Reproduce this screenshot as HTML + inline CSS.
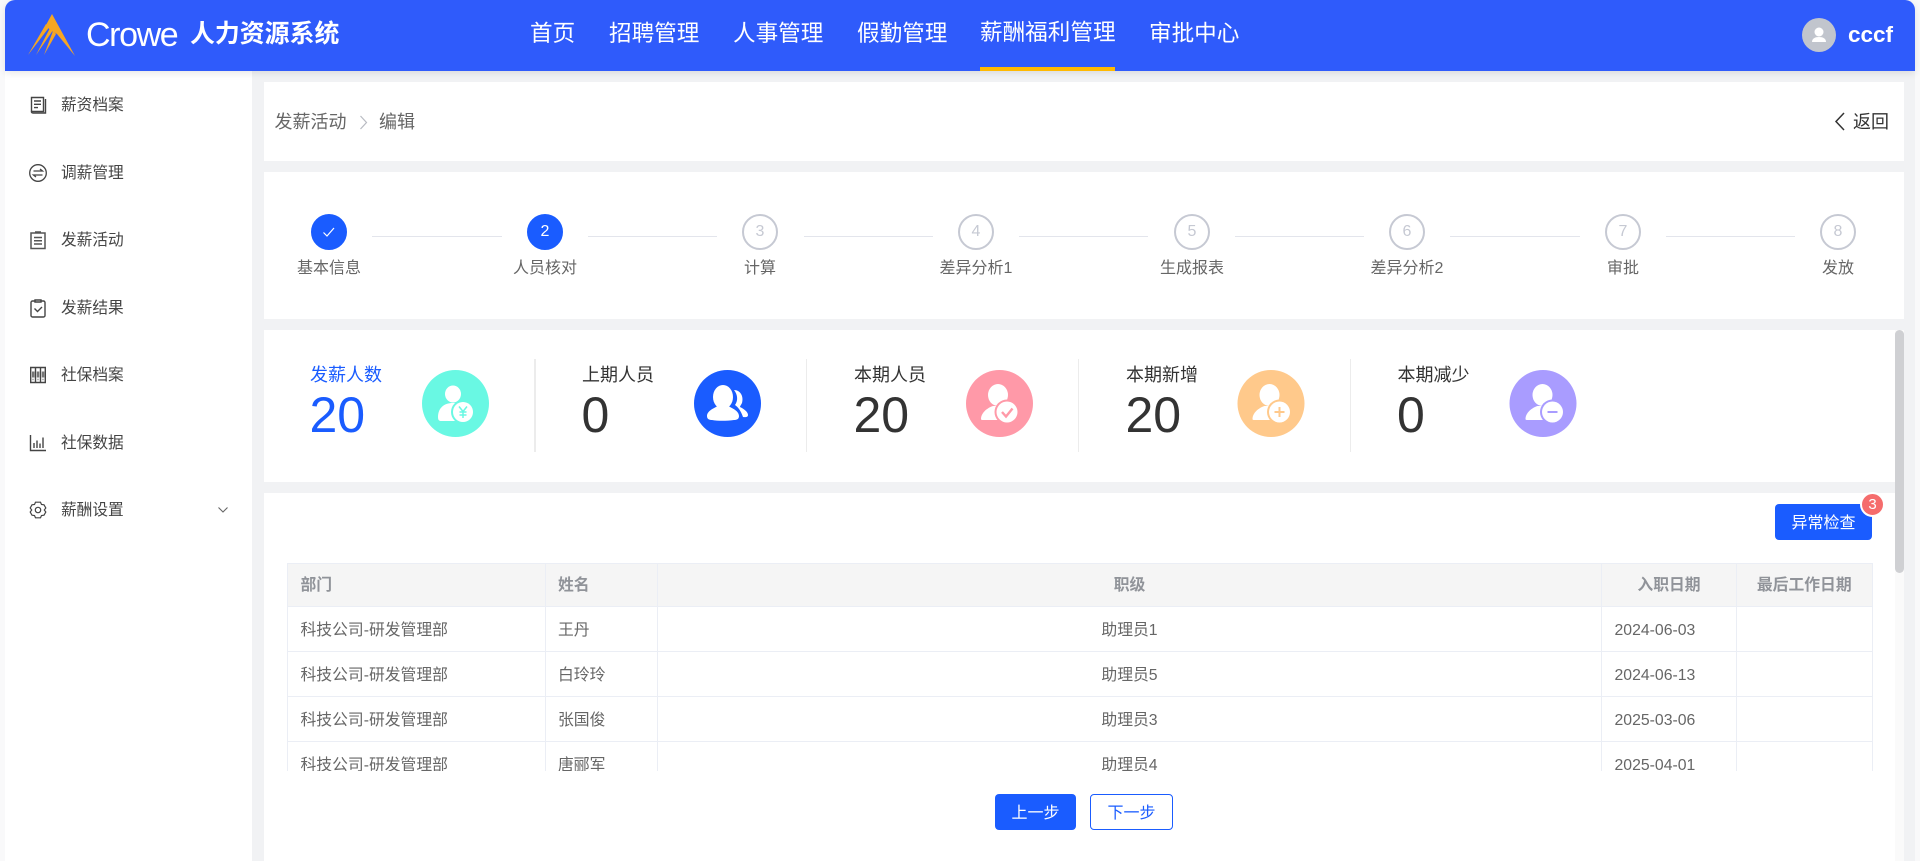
<!DOCTYPE html>
<html lang="zh-CN">
<head>
<meta charset="utf-8">
<title>人力资源系统</title>
<style>
*{box-sizing:border-box;margin:0;padding:0}
html,body{width:1920px;height:861px;overflow:hidden;background:#f9f9fa;font-family:"Liberation Sans","Noto Sans CJK SC",sans-serif}
.a{position:absolute;white-space:nowrap}
#hdr{position:absolute;left:5px;top:0;width:1910px;height:71px;background:#2f5bfb;border-radius:10px 10px 0 0;z-index:3;box-shadow:0 2px 8px rgba(0,0,0,.10)}
#main{position:absolute;left:252px;top:71px;width:1663px;height:790px;background:#f1f2f4}
#side{position:absolute;left:5px;top:71px;width:247px;height:790px;background:#fff;z-index:2}
.card{position:absolute;left:264px;width:1640px;background:#fff}
.nav{position:absolute;top:18px;line-height:32px;font-size:22.6px;color:#fff;white-space:nowrap}
.si{position:absolute;left:61px;font-size:15.7px;line-height:20px;color:#444;white-space:nowrap;z-index:3}
.ic{position:absolute;left:28px;width:20px;height:20px;z-index:3}
.st{position:absolute;top:214px;width:36px;height:36px;border-radius:50%;border:2px solid #c6c9d3;color:#c6c9d3;font-size:16px;line-height:32px;text-align:center;background:#fff}
.st.on{background:#1a5cff;border-color:#1a5cff;color:#fff}
.sl{position:absolute;top:258px;width:120px;text-align:center;font-size:16px;line-height:22px;color:#666;white-space:nowrap}
.ln{position:absolute;top:235.5px;height:1px;background:#e3e5ec}
.lb{position:absolute;top:362.500px;font-size:18px;line-height:24px;color:#333;white-space:nowrap}
.nm{position:absolute;top:386px;font-size:50px;line-height:58px;color:#333;white-space:nowrap}
.dv{position:absolute;top:359px;width:2px;height:93px;background:#ececec}
.ci{position:absolute;top:370px;width:67px;height:67px}
#tw{position:absolute;left:287px;top:563px;width:1586px;height:208px;overflow:hidden}
table{border-collapse:collapse;table-layout:fixed;width:1584.500px}
th,td{border:1px solid #ebeef5;font-size:15.8px;padding:0 0 3px 12.500px;white-space:nowrap;overflow:hidden}
th{height:43px;background:#f5f5f5;color:#909399;font-weight:700;text-align:left}
td{height:45px;color:#666;padding-bottom:1px}
td.d{padding:3px 0 0 12.500px}
.c,td.c{text-align:center;padding:0 0 1px 0}
th.c{padding:0 0 3px 0}
.btn{position:absolute;border-radius:4px;font-size:16px;text-align:center;white-space:nowrap}
</style>
</head>
<body>
<div id="main"></div>
<div id="side"></div>

<div id="hdr"></div>
<svg class="a" style="left:26px;top:12px;z-index:4" width="52" height="46" viewBox="26 12 52 46">
<path d="M52 14L75 56L57 34L50 30L46 25Z" fill="#f5a623"/>
<path d="M46 24L49 27.500L28 55Z" fill="#f5a623"/>
<path d="M50 28L52.500 31L36 55Z" fill="#f5a623"/>
<path d="M53 31L56 34L44 55Z" fill="#f5a623"/>
</svg>
<div class="a" style="left:86px;top:14px;font-size:34px;line-height:42px;color:#fff;letter-spacing:-1.4px;z-index:4">Crowe</div>
<div class="a" style="left:190px;top:17px;font-size:24.9px;line-height:34px;color:#fff;font-weight:700;z-index:4">人力资源系统</div>

<div class="nav" style="left:530px;z-index:4">首页</div>
<div class="nav" style="left:609px;z-index:4">招聘管理</div>
<div class="nav" style="left:733px;z-index:4">人事管理</div>
<div class="nav" style="left:857px;z-index:4">假勤管理</div>
<div class="nav" style="left:980px;top:17px;z-index:4">薪酬福利管理</div>
<div class="nav" style="left:1149px;z-index:4">审批中心</div>
<div class="a" style="left:980px;top:67px;width:135px;height:4px;background:#ffb900;z-index:4"></div>

<svg class="a" style="left:1802px;top:18px;z-index:4" width="34" height="34" viewBox="0 0 34 34">
<circle cx="17" cy="17" r="17" fill="#c1c5cd"/>
<circle cx="17" cy="14" r="4.5" fill="#fff"/>
<path d="M10 24c0-3.5 3-5 7-5s7 1.500 7 5z" fill="#fff"/>
</svg>
<div class="a" style="left:1848px;top:20px;font-size:22.5px;line-height:30px;font-weight:700;color:#fff;z-index:4">cccf</div>

<!-- Sidebar -->
<svg class="ic" style="top:95px" viewBox="0 0 20 20" fill="none" stroke="#444" stroke-width="1.4"><path d="M3.500 2.500h12v14h-12z"/><path d="M3.500 16.500c0 1 .5 1.500 1.500 1.500h12.500V4"/><path d="M6 6h7M6 9.300h7M6 12.600h4"/></svg>
<div class="si" style="top:96px">薪资档案</div>
<svg class="ic" style="top:163px" viewBox="0 0 20 20" fill="none" stroke="#444" stroke-width="1.3"><circle cx="10" cy="10" r="8.300"/><path d="M5.500 8h9l-2.500-2M14.500 12h-9l2.500 2"/></svg>
<div class="si" style="top:164px">调薪管理</div>
<svg class="ic" style="top:230px" viewBox="0 0 20 20" fill="none" stroke="#555" stroke-width="1.500"><path d="M3 3h14v15.500H3z"/><path d="M7 2h6M6 7.500h8M6 10.700h8M6 14h8"/></svg>
<div class="si" style="top:231px">发薪活动</div>
<svg class="ic" style="top:298px" viewBox="0 0 20 20" fill="none" stroke="#444" stroke-width="1.400"><path d="M7 3H4.500A1.500 1.500 0 0 0 3 4.500v13A1.500 1.500 0 0 0 4.500 19h11a1.500 1.500 0 0 0 1.500-1.500v-13A1.500 1.500 0 0 0 15.500 3H13"/><path d="M7 2h6v2H7zM6.500 10.500l3 3 4.500-4.500"/></svg>
<div class="si" style="top:299px">发薪结果</div>
<svg class="ic" style="top:365px" viewBox="0 0 20 20" fill="none" stroke="#444" stroke-width="1.400"><path d="M2.700 2.500h14.600v15H2.700zM7.500 2.500v15M12.500 2.500v15"/><path d="M4 9.500h2.500M8.800 9.500h2.500M13.800 9.500h2.500" stroke="#777" stroke-width="6"/><path d="M4.500 14.500h1M9.500 14.500h1M14.500 14.500h1" stroke="#777"/></svg>
<div class="si" style="top:366px">社保档案</div>
<svg class="ic" style="top:433px" viewBox="0 0 20 20" fill="none" stroke="#444" stroke-width="1.400"><path d="M2.500 2v15.500H18"/><path d="M6 15V10M9 15V7.500M12 15V10.500M15 15V4.500"/></svg>
<div class="si" style="top:434px">社保数据</div>
<svg class="ic" style="top:500px" viewBox="0 0 20 20" fill="none" stroke="#444" stroke-width="1.200"><path d="M7.500 2.200h5l1 2.300 2.500.3 1.800 3.200-1.500 2 1.500 2-1.800 3.200-2.500.3-1 2.300h-5l-1-2.300-2.500-.3L2.200 12l1.500-2-1.500-2L4 4.800l2.500-.3z"/><circle cx="10" cy="10" r="2.700"/></svg>
<div class="si" style="top:501px">薪酬设置</div>
<svg class="a" style="left:217px;top:505px;z-index:3" width="12" height="10" viewBox="0 0 12 10" fill="none" stroke="#666" stroke-width="1.100"><path d="M1.500 2.500L6 7l4.500-4.500"/></svg>

<!-- Breadcrumb -->
<div class="card" style="top:82px;height:79px"></div>
<div class="a" style="left:274.500px;top:109px;font-size:18px;line-height:26px;color:#666">发薪活动</div>
<svg class="a" style="left:358px;top:114px" width="11" height="17" viewBox="0 0 11 17" fill="none" stroke="#b8bbc2" stroke-width="1.200"><path d="M2.500 2l6 6.500-6 6.500"/></svg>
<div class="a" style="left:379px;top:109px;font-size:18px;line-height:26px;color:#666">编辑</div>
<svg class="a" style="left:1833px;top:111px" width="13" height="21" viewBox="0 0 13 21" fill="none" stroke="#333" stroke-width="1.500"><path d="M11 2L3 10.500 11 19"/></svg>
<div class="a" style="left:1853px;top:109px;font-size:18px;line-height:26px;color:#333">返回</div>

<!-- Steps -->
<div class="card" style="top:172px;height:147px"></div>
<div class="ln" style="left:372px;width:130px"></div>
<div class="ln" style="left:588px;width:129px"></div>
<div class="ln" style="left:804px;width:129px"></div>
<div class="ln" style="left:1019px;width:129px"></div>
<div class="ln" style="left:1235px;width:129px"></div>
<div class="ln" style="left:1450px;width:130px"></div>
<div class="ln" style="left:1666px;width:129px"></div>

<div class="st on" style="left:311px"><svg width="14" height="12" viewBox="0 0 14 12" fill="none" stroke="#fff" stroke-width="1.200" style="margin-top:10px;display:block;margin-left:9px"><path d="M1.500 6.500l3.500 3.500 7-8"/></svg></div>
<div class="st on" style="left:527px">2</div>
<div class="st" style="left:742px">3</div>
<div class="st" style="left:958px">4</div>
<div class="st" style="left:1174px">5</div>
<div class="st" style="left:1389px">6</div>
<div class="st" style="left:1605px">7</div>
<div class="st" style="left:1820px">8</div>
<div class="sl" style="left:269px">基本信息</div>
<div class="sl" style="left:485px">人员核对</div>
<div class="sl" style="left:700px">计算</div>
<div class="sl" style="left:916px">差异分析1</div>
<div class="sl" style="left:1132px">生成报表</div>
<div class="sl" style="left:1347px">差异分析2</div>
<div class="sl" style="left:1563px">审批</div>
<div class="sl" style="left:1778px">发放</div>

<!-- Stats -->
<div class="card" style="top:330px;height:152px"></div>
<div class="lb" style="left:310px;color:#1a5cff">发薪人数</div>
<div class="nm" style="left:309.500px;color:#1a5cff">20</div>
<svg class="ci" style="left:422px" viewBox="0 0 67 67"><circle cx="33.500" cy="33.500" r="33.500" fill="#69f8e3"/><ellipse cx="31" cy="24" rx="8" ry="8.500" fill="#fff"/><path d="M16 47c0-9 6-14 15-14s15 5 15 14c0 3-1 4-4 4H19c-2 0-3-1-3-4z" fill="#fff"/><circle cx="41" cy="42" r="12" fill="#69f8e3"/><circle cx="41" cy="42" r="10" fill="#fff"/><path d="M37 36.500l4 5 4-5M41 41.500V48M37.500 42h7M37.500 45h7" fill="none" stroke="#69f8e3" stroke-width="1.500"/></svg>
<div class="dv" style="left:534px"></div>

<div class="lb" style="left:582px">上期人员</div>
<div class="nm" style="left:581.500px">0</div>
<svg class="ci" style="left:694px" viewBox="0 0 67 67"><circle cx="33.500" cy="33.500" r="33.500" fill="#1a5cff"/><path d="M40 20C46 20 50 26 48 33C47 35 46 36 46 37C50 39 54 42 54 45C54 47 52 47.500 49 47C47 41 44 37 41 35C44 31 44 25 40 20Z" fill="#fff"/><ellipse cx="29" cy="27" rx="10" ry="12" fill="#fff"/><path d="M13 46C13 41 20 38 24 36L34 36C38 38 45 41 45 46C45 49 43 50 40 50C32 51 24 51 18 50C15 50 13 49 13 46Z" fill="#fff"/></svg>
<div class="dv" style="left:806px;width:1px"></div>

<div class="lb" style="left:854px">本期人员</div>
<div class="nm" style="left:853.500px">20</div>
<svg class="ci" style="left:966px" viewBox="0 0 67 67"><circle cx="33.500" cy="33.500" r="33.500" fill="#ff99a8"/><ellipse cx="32" cy="25" rx="10" ry="11" fill="#fff"/><path d="M15 49c0-6 6-11 12-13h10c6 1 11 5 11 14L18 50c-2 0-3 0-3-1z" fill="#fff"/><circle cx="41" cy="42" r="12.500" fill="#ff99a8"/><circle cx="41" cy="42" r="10.500" fill="#fff"/><path d="M36 42l4 4.500 6.500-8" fill="none" stroke="#ff99a8" stroke-width="2.400"/></svg>
<div class="dv" style="left:1078px;width:1px"></div>

<div class="lb" style="left:1126px">本期新增</div>
<div class="nm" style="left:1125.500px">20</div>
<svg class="ci" style="left:1237px;width:68px" viewBox="0 0 67 67"><circle cx="33.500" cy="33.500" r="33.500" fill="#ffc98b"/><ellipse cx="32" cy="25" rx="10" ry="11" fill="#fff"/><path d="M15 49c0-6 6-11 12-13h10c6 1 11 5 11 14L18 50c-2 0-3 0-3-1z" fill="#fff"/><circle cx="42" cy="42" r="12.500" fill="#ffc98b"/><circle cx="42" cy="42" r="10.500" fill="#fff"/><path d="M37 42h10M42 37v10" fill="none" stroke="#ffc98b" stroke-width="2"/></svg>
<div class="dv" style="left:1350px;width:1px"></div>

<div class="lb" style="left:1397.500px">本期减少</div>
<div class="nm" style="left:1397px">0</div>
<svg class="ci" style="left:1509px;width:68px" viewBox="0 0 67 67"><circle cx="33.500" cy="33.500" r="33.500" fill="#a99cff"/><ellipse cx="33" cy="25" rx="10" ry="11" fill="#fff"/><path d="M16 49c0-6 6-11 12-13h10c6 1 11 5 11 14L19 50c-2 0-3 0-3-1z" fill="#fff"/><circle cx="43" cy="42" r="12.500" fill="#a99cff"/><circle cx="43" cy="42" r="10.500" fill="#fff"/><path d="M38 42h10" fill="none" stroke="#a99cff" stroke-width="2"/></svg>

<!-- Table card -->
<div class="card" style="top:493px;height:368px"></div>
<div class="btn" style="left:1775px;top:504px;width:97px;height:36px;line-height:40px;background:#1a5cff;color:#fff">异常检查</div>
<div class="a" style="left:1860px;top:492px;width:25px;height:25px;border-radius:50%;background:#f56c6c;border:2px solid #fff;color:#fff;font-size:15px;line-height:21px;text-align:center">3</div>

<div id="tw">
<table>
<colgroup><col style="width:257.500px"><col style="width:112.500px"><col style="width:944px"><col style="width:135px"><col style="width:135.500px"></colgroup>
<tr><th>部门</th><th>姓名</th><th class="c">职级</th><th class="c">入职日期</th><th class="c">最后工作日期</th></tr>
<tr><td>科技公司-研发管理部</td><td>王丹</td><td class="c">助理员1</td><td class="d">2024-06-03</td><td></td></tr>
<tr><td>科技公司-研发管理部</td><td>白玲玲</td><td class="c">助理员5</td><td class="d">2024-06-13</td><td></td></tr>
<tr><td>科技公司-研发管理部</td><td>张国俊</td><td class="c">助理员3</td><td class="d">2025-03-06</td><td></td></tr>
<tr><td>科技公司-研发管理部</td><td>唐郦军</td><td class="c">助理员4</td><td class="d">2025-04-01</td><td></td></tr>
</table>
</div>

<div class="btn" style="left:995px;top:794px;width:81px;height:36px;line-height:40px;background:#1a5cff;color:#fff">上一步</div>
<div class="btn" style="left:1090px;top:794px;width:83px;height:36px;line-height:38px;background:#fff;color:#1a5cff;border:1px solid #1a5cff">下一步</div>

<!-- Scrollbar -->
<div class="a" style="left:1895px;top:330px;width:9px;height:531px;background:#fafafa"></div>
<div class="a" style="left:1895px;top:330px;width:9px;height:243px;background:#cfd0d3;border-radius:5px"></div>
</body>
</html>
